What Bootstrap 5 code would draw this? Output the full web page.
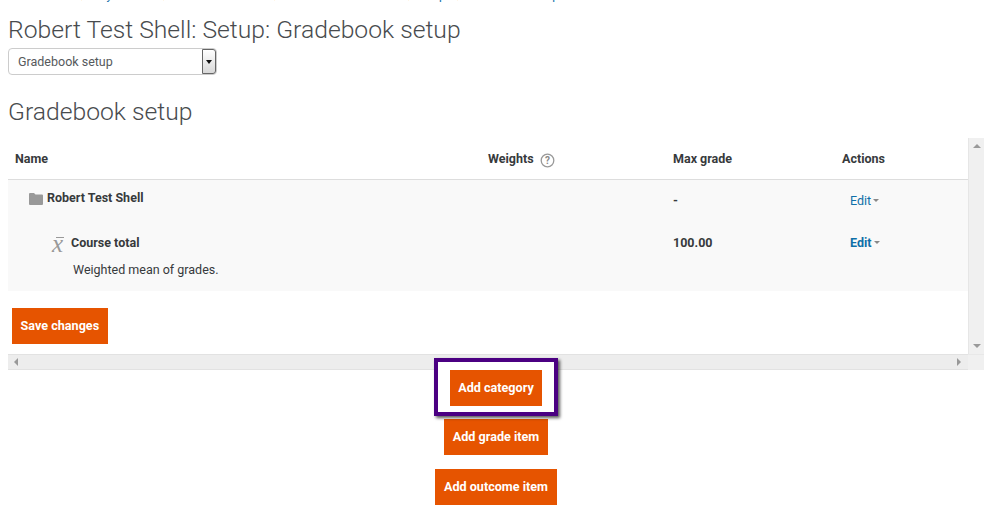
<!DOCTYPE html>
<html lang="en">
<head>
<meta charset="utf-8">
<title>Gradebook setup</title>
<link href="https://cdn.jsdelivr.net/npm/bootstrap@5.3.0/dist/css/bootstrap.min.css" rel="stylesheet">
<style>
html,body{height:518px;overflow:hidden;background:#fff}
body{font-family:Roboto,"Liberation Sans",sans-serif;font-size:12.5px;color:#373a3c;padding:0 10px 0 8px}
.crumbs{height:3px;margin-bottom:1px;overflow:hidden;display:flex;align-items:flex-end;white-space:nowrap;line-height:15px;font-size:12px}
.crumbs a{color:#0f6fa8;text-decoration:none;display:block;flex:none}
.crumbs a:nth-of-type(1){width:73px}
.crumbs a:nth-of-type(2){width:81px;padding-left:14px}
.crumbs a:nth-of-type(3){width:110px;padding-left:10px}
.crumbs a:nth-of-type(4){width:133px;padding-left:14px}
.crumbs a:nth-of-type(5){width:48px;padding-left:6px}
.crumbs a:nth-of-type(6){padding-left:10px}
.crumbs i{font-style:normal;color:#bbb;width:1px;overflow:hidden;flex:none}
.ttl{font-weight:300;font-size:24.7px;line-height:30px;color:#484b4e;margin:0}
.ttl-one{padding-top:11px;height:44px}
.ttl-two{margin-top:22px;height:41px;padding-top:0}
.jump{position:relative;width:209px;height:27px}
.jump select{appearance:none;width:100%;height:100%;border:1px solid #ccc;border-radius:4px;background:#fff;color:#55595c;font:12.5px/25px Roboto,sans-serif;padding:0 0 3px 9px;outline:0}
.jump span{position:absolute;right:1px;top:1px;bottom:1px;width:14px;border:1px solid #666;border-radius:0 3px 3px 0;background:linear-gradient(#fff,#d8d8d8);display:flex;align-items:center;justify-content:center;pointer-events:none}
.jump span::after{content:"";border:solid transparent;border-width:4px 3.5px 0;border-top-color:#111}
.scroller{width:976px;height:232px;display:grid;grid-template-columns:960px 16px;grid-template-rows:216px 16px}
.pane{overflow:hidden;background:#fff}
.grade{table-layout:fixed;width:960px;margin:0;border-collapse:collapse}
.grade th,.grade td{border:0;padding:0;box-shadow:none;background:transparent;color:#373a3c;font-size:12.5px;line-height:18px;vertical-align:top}
.grade thead th{height:41px;padding-top:12px;border-bottom:1px solid #ddd;font-weight:700}
.grade tbody tr{background:#f9f9f9}
.grade .c1{width:480px;padding-left:7px}.grade .c2{width:185px}.grade .c3{width:169px}
.grade tbody .r1 td{height:43px;padding-top:11px}
.grade tbody .r2 td{height:69px;padding-top:12px}
.grade tbody .r1 .c3,.grade tbody .r1 .c4{padding-top:12px}
.grade .c3,.grade .c4{font-weight:700}
.rowname{display:flex;align-items:flex-start;font-weight:700}
.r1 .rowname{padding-left:14px;margin-top:-2px}.r2 .rowname{padding-left:37px}
.rowname svg{margin:4px 4px 0 0}
.xbar{position:relative;font:italic 500 25px/18px "Liberation Serif",serif;color:#999;width:19px;margin-top:1px}
.xbar::before{content:"";position:absolute;left:4px;top:2px;width:8px;height:1px;background:#999}
.note{padding-left:58px;margin-top:8px;font-weight:400}
.edit{color:#0f6fa8;text-decoration:none;margin-left:8px;font-weight:400;display:inline-flex;align-items:center}
.edit.strong{font-weight:700}
.edit::after{content:"";margin:0 0 1px 2px;border:solid transparent;border-width:3px 3px 0;border-top-color:#888}
.q{margin:0 0 -2px 3px}
.orange{background:#e65400;border:0;border-radius:0;color:#fff;font-weight:700;font-size:12.6px;line-height:18px;padding:9px 8.6px}
.orange:hover{background:#e65400;color:#fff}
.savebox{padding:17px 4px 0}
.vbar{background:#f0f0f0;border-left:1px solid #e6e6e6;display:flex;flex-direction:column;justify-content:space-between;align-items:center;padding:6px 0}
.hbar{background:#ededed;border-top:1px solid #e2e2e2;border-bottom:1px solid #e2e2e2;display:flex;justify-content:space-between;align-items:center;padding:0 7px 0 6px}
.corner{background:#f0f0f0;border-top:1px solid #e8e8e8}
.tri{display:block;width:0;height:0;border:solid transparent}
.up{border-width:0 4px 4px;border-bottom-color:#999}
.down{border-width:4px 4px 0;border-top-color:#999}
.left{border-width:4px 4px 4px 0;border-right-color:#999}
.right{border-width:4px 0 4px 4px;border-left-color:#999}
.stack{display:flex;flex-direction:column;align-items:center;width:976px}
.callout{position:relative;margin-top:-12px;padding:7.5px 11.5px 6px;border:4.5px solid #4b0082;background:#fff;box-shadow:2px 2px 3px rgba(0,0,0,.65)}
.callout .orange{display:block}
.next{margin-top:3.5px}.last{margin-top:14px}
</style>
</head>
<body>
<nav class="crumbs"><a href="#">Dashboard</a><i>|</i><a href="#">My courses</a><i>|</i><a href="#">Miscellaneous</a><i>|</i><a href="#">Robert Test Shell</a><i>|</i><a href="#">Setup</a><i>|</i><a href="#">Gradebook setup</a></nav>
<h2 class="ttl ttl-one">Robert Test Shell: Setup: Gradebook setup</h2>
<div class="jump"><select aria-label="Jump"><option>Gradebook setup</option></select><span></span></div>
<h2 class="ttl ttl-two">Gradebook setup</h2>
<div class="scroller">
  <div class="pane">
    <table class="table grade">
      <thead><tr>
        <th class="c1">Name</th>
        <th class="c2">Weights <svg class="q" width="15" height="15" viewBox="0 0 15 15"><circle cx="7.5" cy="7.5" r="6.3" fill="#fff" stroke="#999" stroke-width="1.3"/><text x="7.5" y="11" text-anchor="middle" font-family="Roboto,sans-serif" font-size="10" fill="#888">?</text></svg></th>
        <th class="c3">Max grade</th>
        <th class="c4">Actions</th>
      </tr></thead>
      <tbody>
        <tr class="r1">
          <td class="c1"><div class="rowname"><svg width="14" height="12" viewBox="0 0 14 12"><path d="M0 1a1 1 0 0 1 1-1h4l1.500 1.500H13a1 1 0 0 1 1 1V11a1 1 0 0 1-1 1H1a1 1 0 0 1-1-1z" fill="#999"/></svg>Robert Test Shell</div></td>
          <td class="c2"></td><td class="c3">-</td>
          <td class="c4"><a class="edit" href="#">Edit</a></td>
        </tr>
        <tr class="r2">
          <td class="c1"><div class="rowname"><span class="xbar">x</span>Course total</div><div class="note">Weighted mean of grades.</div></td>
          <td class="c2"></td><td class="c3">100.00</td>
          <td class="c4"><a class="edit strong" href="#">Edit</a></td>
        </tr>
      </tbody>
    </table>
    <div class="savebox"><button class="btn orange">Save changes</button></div>
  </div>
  <div class="vbar"><span class="tri up"></span><span class="tri down"></span></div>
  <div class="hbar"><span class="tri left"></span><span class="tri right"></span></div>
  <div class="corner"></div>
</div>
<div class="stack">
  <div class="callout"><button class="btn orange">Add category</button></div>
  <button class="btn orange next">Add grade item</button>
  <button class="btn orange last">Add outcome item</button>
</div>
<script src="https://cdn.jsdelivr.net/npm/bootstrap@5.3.0/dist/js/bootstrap.bundle.min.js"></script>
</body>
</html>
